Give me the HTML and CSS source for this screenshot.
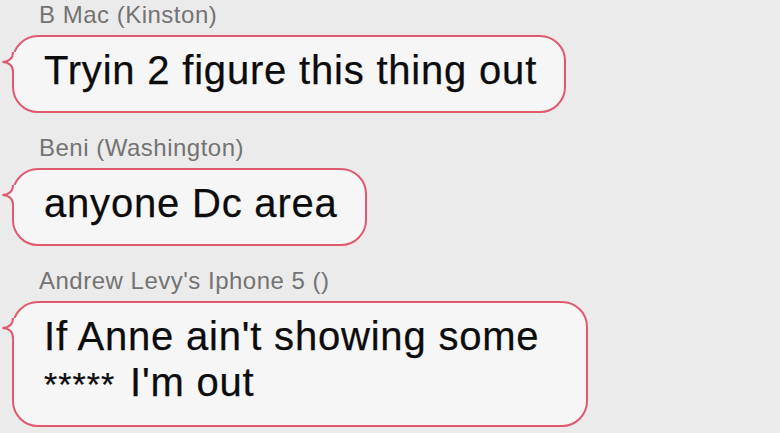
FILE: index.html
```html
<!DOCTYPE html>
<html>
<head>
<meta charset="utf-8">
<link rel="stylesheet" href="styles.css">
</head>
<body>
<div class="thread">
  <div class="msg">
    <div class="name">B Mac (Kinston)</div>
    <div class="bubble">
      <svg class="tail" width="16" height="20" viewBox="0 0 16 20"><path class="tail-fill" d="M13 0 C13 6 9 9.5 2.5 10 C9 10.5 13 14 13 20 L16 20 L16 0 Z"/><path class="tail-line" d="M13 0 C13 6 9 9.5 2.5 10 C9 10.5 13 14 13 20"/></svg>
      Tryin 2 figure this thing out
    </div>
  </div>
  <div class="msg">
    <div class="name">Beni (Washington)</div>
    <div class="bubble">
      <svg class="tail" width="16" height="20" viewBox="0 0 16 20"><path class="tail-fill" d="M13 0 C13 6 9 9.5 2.5 10 C9 10.5 13 14 13 20 L16 20 L16 0 Z"/><path class="tail-line" d="M13 0 C13 6 9 9.5 2.5 10 C9 10.5 13 14 13 20"/></svg>
      anyone Dc area
    </div>
  </div>
  <div class="msg">
    <div class="name">Andrew Levy's Iphone 5 ()</div>
    <div class="bubble">
      <svg class="tail" width="16" height="20" viewBox="0 0 16 20"><path class="tail-fill" d="M13 0 C13 6 9 9.5 2.5 10 C9 10.5 13 14 13 20 L16 20 L16 0 Z"/><path class="tail-line" d="M13 0 C13 6 9 9.5 2.5 10 C9 10.5 13 14 13 20"/></svg>
      If Anne ain't showing some <span class="stars">*****</span> I'm out
    </div>
  </div>
</div>
</body>
</html>
```

FILE: styles.css
```css
html, body {
  margin: 0;
  padding: 0;
  background: #ebebeb;
  width: 780px;
  height: 433px;
  overflow: hidden;
}

.thread {
  display: flex;
  flex-direction: column;
  gap: 23px;
  padding: 3px 0 0 12px;
  font-family: "Liberation Sans", Arial, sans-serif;
}

.msg {
  display: flex;
  flex-direction: column;
  align-items: flex-start;
}

.name {
  margin-left: 27px;
  font-size: 24px;
  line-height: 24px;
  letter-spacing: 0.5px;
  color: #737373;
}

.bubble {
  position: relative;
  margin-top: 8px;
  max-width: 576px;
  box-sizing: border-box;
  padding: 10px 27px 18px 30px;
  border: 2px solid #e0596e;
  border-radius: 26px;
  background: #f6f6f6;
  color: #0c0c0c;
  font-size: 40px;
  line-height: 46px;
  letter-spacing: 0.8px;
  -webkit-text-stroke: 0.25px #0c0c0c;
}

.stars {
  font-size: 34px;
  letter-spacing: 1px;
  margin-right: 3px;
}

.tail {
  position: absolute;
  left: -14px;
  top: 15px;
  overflow: visible;
}

.tail-fill {
  fill: #f6f6f6;
}

.tail-line {
  fill: none;
  stroke: #e0596e;
  stroke-width: 2;
}
```
